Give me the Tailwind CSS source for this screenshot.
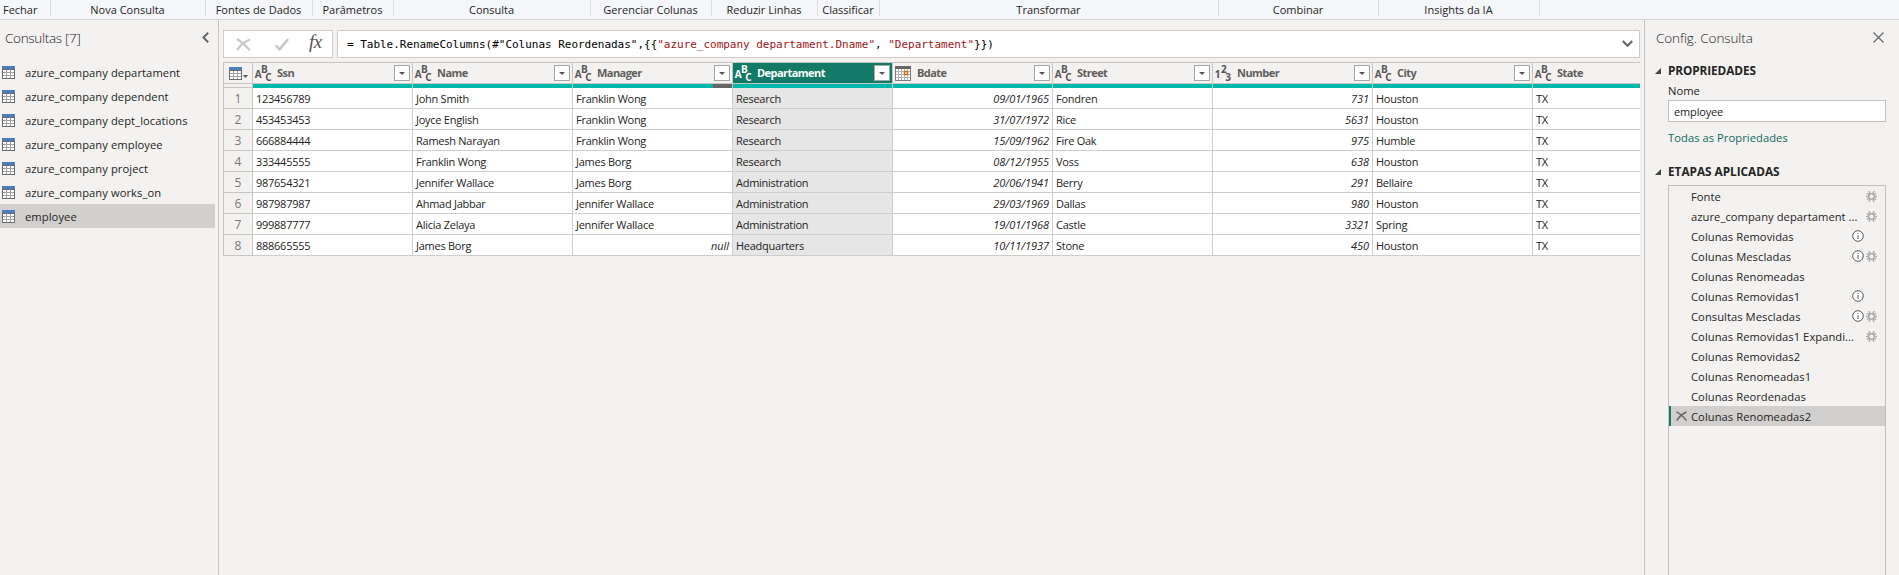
<!DOCTYPE html>
<html lang="pt-BR">
<head>
<meta charset="utf-8">
<title>Editor do Power Query</title>
<script src="https://cdn.jsdelivr.net/npm/@tailwindcss/browser@4"></script>
</head>
<body class="flex h-[575px] w-[1899px] flex-col overflow-hidden bg-[#f3f2f1] font-['Open_Sans','Liberation_Sans',sans-serif] text-[11.2px] text-[#252423]">

<svg class="hidden">
  <symbol id="table" viewBox="0 0 13 13">
    <path d="M0 0h13v13H0z" fill="#6b6b6b"/>
    <path d="M0 0h13v3H0z" fill="#4a81bd"/>
    <path d="M1 4h3v2H1zM5 4h3v2H5zM9 4h3v2H9zM1 7h3v2H1zM5 7h3v2H5zM9 7h3v2H9zM1 10h3v2H1zM5 10h3v2H5zM9 10h3v2H9z" fill="#fff"/>
    <path d="M4 4h1v8H4zM8 4h1v8H8zM1 6h11v1H1zM1 9h11v1H1z" fill="#a3a3a3"/>
  </symbol>
  <symbol id="calendar" viewBox="0 0 16 15">
    <path d="M0 0h16v15H0z" fill="#7d7d7d"/>
    <path d="M0 0h16v3H0z" fill="#666"/>
    <path d="M1 3h14v11H1z" fill="#fff"/>
    <path d="M3.5 3v11M6.5 3v11M9.5 3v11M12.5 3v11M1 5.5h14M1 8.5h14M1 11.5h14" stroke="#b5b5b5"/>
    <path d="M9.5 5.5h3v3h-3z" fill="#fff" stroke="#d8701f" stroke-width="1.6"/>
  </symbol>
  <symbol id="gear" viewBox="0 0 11 11">
    <g stroke="#b0aeac" stroke-width="1.5" fill="none"><circle cx="5.5" cy="5.5" r="2.7"/><path d="M0 5.500h2.800M8.200 5.500H11M3 0l1.200 3M8 0 6.800 3M3 11l1.200-3M8 11 6.800 8M1 2.500l2.500 1.300M10 2.500 7.500 3.800M1 8.500l2.500-1.300M10 8.500 7.500 7.200"/></g>
  </symbol>
  <symbol id="info" viewBox="0 0 12 12">
    <circle cx="6" cy="6" r="5.3" fill="#fff" stroke="#5a5a5a"/>
    <path d="M6 5v4M6 3v1" stroke="#5a5a5a"/>
  </symbol>
</svg>

<header id="ribbon" class="flex h-5 shrink-0 border-b border-[#d6d4d2] bg-[#f4f6f9] text-[11px] leading-4"></header>

<div class="flex min-h-0 flex-1">
  <aside class="w-[219px] shrink-0 border-r border-[#c8c6c4]">
    <div class="flex h-10 justify-between pt-2 pr-[9px] pl-[5px]">
      <h2 class="text-[13.5px] leading-5 font-light tracking-[-0.3px] text-[#222]">Consultas [7]</h2>
      <svg class="mt-1 h-[11px] w-[7px]" viewBox="0 0 7 11"><path d="M6.2 .8 1.5 5.5l4.7 4.7" fill="none" stroke="#666" stroke-width="2"/></svg>
    </div>
    <ul id="queries"></ul>
  </aside>

  <main class="flex w-[1421px] shrink-0 flex-col overflow-hidden pt-2.5 pl-1">
    <div class="flex h-7 gap-1">
      <div class="flex w-[110px] shrink-0 items-center border border-[#cfcdcb] bg-white pl-3">
        <svg class="h-[13px] w-[15px]" viewBox="0 0 15 13"><path d="M1 .8C5 3.500 10 8 14 12.300M14 1.500C9 3.500 4 7.500 1.200 12" fill="none" stroke="#c8c8c8" stroke-width="2.200"/></svg>
        <svg class="ml-6 h-[13px] w-[14px]" viewBox="0 0 14 13"><path d="M.8 7.500 4.500 11.300 13.200 1" fill="none" stroke="#c8c8c8" stroke-width="2.600"/></svg>
        <span class="ml-5 pb-1 font-['Liberation_Serif',serif] text-[19px] leading-5 tracking-[-0.5px] text-[#555] italic">fx</span>
      </div>
      <div class="flex flex-1 items-center justify-between border border-[#cfcdcb] bg-white pr-1.5 pl-[9px]">
        <code class="pt-0.5 font-['DejaVu_Sans_Mono',monospace] text-[11px] tracking-[-0.022px] whitespace-pre text-black">= Table.RenameColumns(#"Colunas Reordenadas",{{<span class="text-[#a31515]">"azure_company departament.Dname"</span>, <span class="text-[#a31515]">"Departament"</span>}})</code>
        <svg class="h-2 w-[11px]" viewBox="0 0 11 8"><path d="M.8 1 5.500 5.800 10.200 1" fill="none" stroke="#666" stroke-width="2.200"/></svg>
      </div>
    </div>
    <div class="mt-1 border-t border-l border-[#c8c6c4]">
      <div id="head" class="flex h-[21px]"></div>
      <div id="quality" class="flex h-1"></div>
      <div id="rows"></div>
    </div>
  </main>

  <aside class="ml-1 flex w-[255px] flex-col border-l border-[#c8c6c4] pr-[13px] pl-2.5">
    <div class="flex h-10 justify-between pt-2 pr-[2px]">
      <h2 class="pl-px text-[13.5px] leading-5 font-light tracking-[-0.1px] text-[#222]">Config. Consulta</h2>
      <svg class="mt-1 h-[11px] w-[11px]" viewBox="0 0 11 11"><path d="m.5.5 10 10m0-10-10 10" stroke="#666" stroke-width="1.200"/></svg>
    </div>
    <h3 class="flex h-5 items-center gap-[7px] pt-0.5 text-[11.8px] font-bold tracking-[-0.1px]"><svg class="h-1.5 w-1.5" viewBox="0 0 6 6"><path d="M6 0v6H0z" fill="#444"/></svg>PROPRIEDADES</h3>
    <div class="flex flex-col pl-[13px]">
      <label class="h-5 leading-[22px]">Nome</label>
      <div class="h-[22px] border border-[#c3c1bf] bg-white pl-[5px] text-[11px] leading-[22px] tracking-[-0.15px]">employee</div>
      <a class="h-[39px] pt-[5px] leading-[22px] tracking-[0.05px] text-[#0f6a5a]">Todas as Propriedades</a>
    </div>
    <h3 class="flex h-[22px] items-center gap-[7px] text-[11.8px] font-bold tracking-[-0.02px]"><svg class="h-1.5 w-1.5" viewBox="0 0 6 6"><path d="M6 0v6H0z" fill="#444"/></svg>ETAPAS APLICADAS</h3>
    <ul id="steps" class="mt-0.5 ml-[13px] flex-1 border-x border-t border-[#c3c1bf]"></ul>
  </aside>
</div>

<script>
const put = (id, html) => { document.getElementById(id).innerHTML = html; };

// Ribbon groups: label and width up to and including the separator
put('ribbon', [['Fechar',51],['Nova Consulta',155],['Fontes de Dados',107],['Parâmetros',81],['Consulta',197],['Gerenciar Colunas',121],['Reduzir Linhas',106],['Classificar',62],['Transformar',339],['Combinar',160],['Insights da IA',161]]
  .map(([t, w], i) => `<div class="flex h-4 border-r border-[#dcdee0] pt-0.5 ${i ? 'justify-center pr-px' : 'pl-[3px]'}" style="width:${w}px">${t}</div>`).join(''));

put('queries', ['azure_company departament','azure_company dependent','azure_company dept_locations','azure_company employee','azure_company project','azure_company works_on','employee']
  .map((t, i) => `<li class="flex h-6 w-[215px] items-center gap-2.5 pl-0.5 ${i === 6 ? 'bg-[#d2d0ce]' : ''}"><svg class="h-[13px] w-[13px]"><use href="#table"/></svg><span class="pt-0.5 leading-5 tracking-[0.07px]">${t}</span></li>`).join(''));

const cols = [['Ssn','abc'],['Name','abc'],['Manager','abc'],['Departament','abc'],['Bdate','date'],['Street','abc'],['Number','num'],['City','abc'],['State','abc']];
const glyphs = (a, b, c, color) => `<svg class="h-[18px] w-[18px] overflow-visible" viewBox="0 0 18 18" font-family="Open Sans" font-weight="700" font-size="10" fill="${color}"><text x="-.3" y="14.300">${a}</text><text x="6" y="9.300">${b}</text><text x="10.200" y="17">${c}</text></svg>`;
const icon = (k, color) => k === 'date' ? '<svg class="h-[15px] w-4"><use href="#calendar"/></svg>'
  : k === 'num' ? glyphs('1', '2', '3', color) : glyphs('A', 'B', 'C', color);

put('head', `<div class="flex w-[29px] shrink-0 items-center border-r border-b border-[#c8c6c4] pl-[5px]"><svg class="h-[13px] w-[13px]"><use href="#table"/></svg><svg class="mt-[7px] ml-px h-[3px] w-[5px]" viewBox="0 0 5 3"><path d="M0 0h5L2.500 3z" fill="#555"/></svg></div>` +
  cols.map(([t, k], i) => { const on = i === 3; return `<div class="flex w-40 shrink-0 items-center border-r border-b border-[#c8c6c4] pr-[2px] pl-[2px] ${on ? 'bg-[#127a66] text-white' : 'text-[#605e5c]'}">
    <span class="w-[22px] shrink-0">${icon(k, on ? '#fff' : '#555')}</span><span class="flex-1 text-[11px] font-bold tracking-[-0.55px]">${t}</span>
    ${i < 8 ? '<span class="flex h-4 w-4 items-center justify-center border border-[#a6a6a6] bg-white"><svg class="h-[3px] w-1.5" viewBox="0 0 6 3"><path d="M0 0h6L3 3z" fill="#555"/></svg></span>' : ''}</div>`; }).join(''));

put('quality', `<div class="w-[29px] shrink-0 border-r border-b border-[#c8c6c4]"></div>` +
  cols.map((c, i) => `<div class="flex w-40 shrink-0 justify-end border-r border-[#c8c6c4] bg-[#01b8aa]">${i === 2 ? '<span class="w-[19px] bg-[#666]"></span>' : ''}</div>`).join(''));

const data = [
  ['123456789','John Smith','Franklin Wong','Research','09/01/1965','Fondren','731','Houston','TX'],
  ['453453453','Joyce English','Franklin Wong','Research','31/07/1972','Rice','5631','Houston','TX'],
  ['666884444','Ramesh Narayan','Franklin Wong','Research','15/09/1962','Fire Oak','975','Humble','TX'],
  ['333445555','Franklin Wong','James Borg','Research','08/12/1955','Voss','638','Houston','TX'],
  ['987654321','Jennifer Wallace','James Borg','Administration','20/06/1941','Berry','291','Bellaire','TX'],
  ['987987987','Ahmad Jabbar','Jennifer Wallace','Administration','29/03/1969','Dallas','980','Houston','TX'],
  ['999887777','Alicia Zelaya','Jennifer Wallace','Administration','19/01/1968','Castle','3321','Spring','TX'],
  ['888665555','James Borg',null,'Headquarters','10/11/1937','Stone','450','Houston','TX']];
put('rows', data.map((r, n) => `<div class="flex h-[21px] leading-[21px]"><div class="w-[29px] shrink-0 border-r border-b border-[#c8c6c4] text-center text-[12px] text-[#777]">${n + 1}</div>` +
  r.map((v, i) => `<div class="w-40 shrink-0 border-r border-b border-[#d0cecc] px-[3px] text-[11px] ${i === 3 ? 'bg-[#e6e6e6]' : 'bg-white'} ${v === null || i === 4 || i === 6 ? 'text-right tracking-[-0.05px] italic' : 'tracking-[-0.26px]'}">${v ?? 'null'}</div>`).join('') + '</div>').join(''));

// Applied steps: label, has info mark, has settings gear
const steps = [['Fonte',0,1],['azure_company departament ...',0,1],['Colunas Removidas',1,0],['Colunas Mescladas',1,1],['Colunas Renomeadas',0,0],['Colunas Removidas1',1,0],['Consultas Mescladas',1,1],['Colunas Removidas1 Expandi...',0,1],['Colunas Removidas2',0,0],['Colunas Renomeadas1',0,0],['Colunas Reordenadas',0,0],['Colunas Renomeadas2',0,0]];
put('steps', steps.map(([t, info, gear], i) => { const on = i === 11; return `<li class="flex h-5 items-center border-l-2 pr-2 pl-[5px] ${on ? 'border-[#127a66] bg-[#d2d0ce]' : 'border-transparent'}">
  <span class="w-[15px] shrink-0">${on ? '<svg class="h-2.5 w-[11px]" viewBox="0 0 11 10"><path d="M.5.8C4 2.500 8 6.500 10.500 9.500M10.500 1C7 2.500 3 6 .8 9.500" fill="none" stroke="#666" stroke-width="1.500"/></svg>' : ''}</span>
  <span class="flex-1 pt-0.5 leading-[18px] tracking-[0.05px] whitespace-nowrap">${t}</span>
  ${info ? '<svg class="h-3 w-3"><use href="#info"/></svg>' : ''}<span class="ml-0.5 w-[11px] shrink-0">${gear ? '<svg class="h-[11px] w-[11px]"><use href="#gear"/></svg>' : ''}</span></li>`; }).join(''));
</script>
</body>
</html>
